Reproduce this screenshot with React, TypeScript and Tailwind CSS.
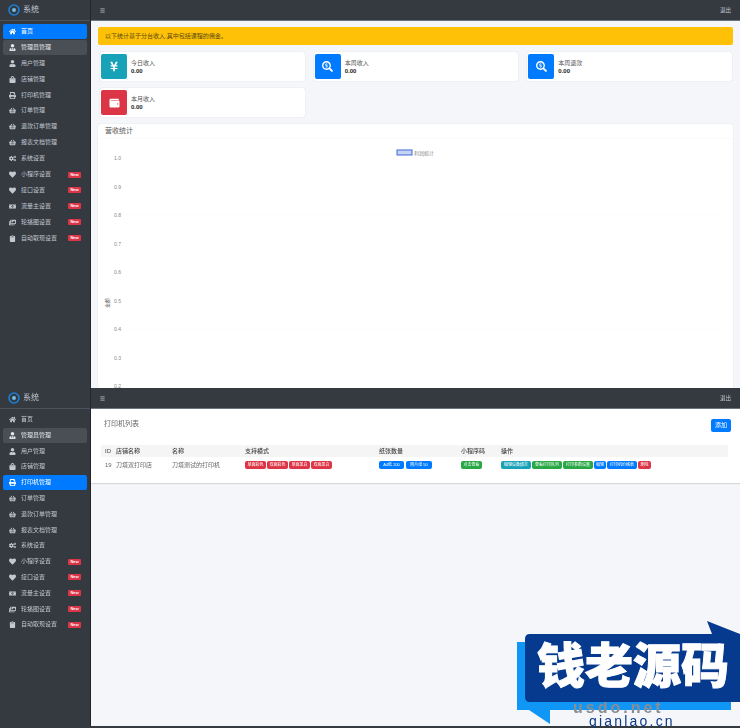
import type { ComponentType, ReactNode } from 'react';
import {
  FaHome, FaUserTie, FaUser, FaShoppingBag, FaPrint, FaShoppingBasket, FaCogs, FaHeart,
  FaMoneyBillAlt, FaImages, FaClipboard, FaYenSign, FaSearchDollar, FaWallet, FaBars,
} from 'react-icons/fa';

const font = { fontFamily: '"Liberation Sans", "Noto Sans CJK SC", sans-serif' };

type NavItem = { label: string; icon: ComponentType<{ className?: string }>; isNew?: boolean };

const navItems: NavItem[] = [
  { label: '首页', icon: FaHome },
  { label: '管理员管理', icon: FaUserTie },
  { label: '用户管理', icon: FaUser },
  { label: '店铺管理', icon: FaShoppingBag },
  { label: '打印机管理', icon: FaPrint },
  { label: '订单管理', icon: FaShoppingBasket },
  { label: '退款订单管理', icon: FaShoppingBasket },
  { label: '报表文档管理', icon: FaShoppingBasket },
  { label: '系统设置', icon: FaCogs },
  { label: '小程序设置', icon: FaHeart, isNew: true },
  { label: '接口设置', icon: FaHeart, isNew: true },
  { label: '流量主设置', icon: FaMoneyBillAlt, isNew: true },
  { label: '轮播图设置', icon: FaImages, isNew: true },
  { label: '自动取现设置', icon: FaClipboard, isNew: true },
];

function Sidebar({ active, gap }: { active: number; gap: string }) {
  return (
    <aside className="w-[91px] shrink-0 bg-[#343a40] border-r border-[#23272b]">
      <div className="h-[21px] flex items-center pl-[8px] gap-[3px] border-b border-[#4b545c]">
        <svg width="12" height="12" viewBox="0 0 12 12">
          <circle cx="6" cy="6" r="5" fill="none" stroke="#1c7ed6" strokeWidth="1.6" />
          <circle cx="6" cy="6" r="2" fill="#74b9e8" />
        </svg>
        <span className="text-[8px] text-[#c2c7d0]">系统</span>
      </div>
      <nav className={`pt-[3px] flex flex-col ${gap}`}>
        {navItems.map((item, i) => {
          const Icon = item.icon;
          return (
            <div
              key={item.label}
              className={`h-[15px] mx-[3px] rounded-[2px] flex items-center pl-[6px] pr-[6px] text-[6px] ${
                i === active
                  ? 'bg-[#007bff] text-white'
                  : i === 1
                    ? 'bg-[#4a4f55] text-[#e4e6e9]'
                    : 'text-[#c2c7d0]'
              }`}
            >
              <Icon className="w-[7px] h-[7px] mr-[5px] shrink-0" />
              <span className="flex-1 whitespace-nowrap">{item.label}</span>
              {item.isNew && (
                <span className="w-[13px] h-[6px] rounded-[1px] bg-[#dc3545] text-white text-[4px] font-bold leading-[6px] text-center">
                  New
                </span>
              )}
            </div>
          );
        })}
      </nav>
    </aside>
  );
}

function TopBar({ action }: { action: string }) {
  return (
    <header className="h-[21px] shrink-0 bg-[#343a40] border-b border-[#6c757d] flex items-center justify-between pl-[9px] pr-[9px] text-[#c2c7d0]">
      <FaBars className="w-[5px] h-[5px]" />
      <span className="text-[5.5px]">{action}</span>
    </header>
  );
}

function StatCard({ label, color, icon }: { label: string; color: string; icon: ReactNode }) {
  return (
    <div className="h-[29px] bg-white rounded-[2px] shadow-[0_0_1px_rgba(0,0,0,0.2)] flex items-center pl-[1px]">
      <div className={`w-[26px] h-[25px] rounded-[2px] flex items-center justify-center text-white ${color}`}>
        {icon}
      </div>
      <div className="ml-[4px] text-[6px] leading-[8px] text-[#555]">
        <div>{label}</div>
        <div className="font-bold text-[#222]">0.00</div>
      </div>
    </div>
  );
}

function Chart() {
  const ticks = ['1.0', '0.9', '0.8', '0.7', '0.6', '0.5', '0.4', '0.3', '0.2'];
  return (
    <svg className="w-full h-[250px] block" viewBox="0 0 635 250">
      {ticks.map((t, i) => (
        <g key={t}>
          <line x1="27" x2="625" y1={19 + i * 28.5} y2={19 + i * 28.5} stroke="#fbfbfb" strokeWidth="0.5" />
          <text x="16" y={21 + i * 28.5} fontSize="5" fill="#888">{t}</text>
        </g>
      ))}
      <text x="9" y="167" fontSize="5" fill="#666" transform="rotate(-90 11 167)">金额</text>
      <rect x="299" y="11" width="15" height="5" fill="#c6d4f4" stroke="#3f67d8" strokeWidth="1" />
      <text x="316" y="15.5" fontSize="5" fill="#888">利润统计</text>
    </svg>
  );
}

function Dashboard() {
  return (
    <section className="h-[388px] flex overflow-hidden">
      <Sidebar active={0} gap="gap-[0.9px]" />
      <div className="flex-1 min-w-0 flex flex-col bg-[#f4f6f9]">
        <TopBar action="退出" />
        <div className="pt-[6px] pl-[7px] pr-[7px]">
          <div className="h-[18px] rounded-[2px] bg-[#ffc107] flex items-center pl-[7px] text-[6px] text-[#5a4a10]">
            以下统计基于分台收入,其中包括课程的佣金。
          </div>
          <div className="mt-[7px] grid grid-cols-3 gap-x-[9px] gap-y-[7px] pl-[2px] pr-[1px]">
            <StatCard label="今日收入" color="bg-[#17a2b8]" icon={<FaYenSign className="w-[10px] h-[11px]" />} />
            <StatCard label="本周收入" color="bg-[#007bff]" icon={<FaSearchDollar className="w-[11px] h-[11px]" />} />
            <StatCard label="本周退款" color="bg-[#007bff]" icon={<FaSearchDollar className="w-[11px] h-[11px]" />} />
            <StatCard label="本月收入" color="bg-[#dc3545]" icon={<FaWallet className="w-[11px] h-[10px]" />} />
          </div>
          <div className="mt-[7px] bg-white rounded-t-[2px] shadow-[0_0_1px_rgba(0,0,0,0.2)]">
            <div className="h-[15px] flex items-center pl-[7px] text-[7px] text-[#555] border-b border-[#fbfbfb]">营收统计</div>
            <Chart />
          </div>
        </div>
      </div>
    </section>
  );
}

function Tag({ text, color, w }: { text: string; color: string; w: string }) {
  return (
    <span className={`h-[8px] rounded-[2px] text-white text-[4px] leading-[8px] text-center whitespace-nowrap overflow-hidden shrink-0 ${color} ${w}`}>
      {text}
    </span>
  );
}

function PrinterList() {
  return (
    <section className="flex-1 min-h-0 flex overflow-hidden">
      <Sidebar active={4} gap="gap-[0.8px]" />
      <div className="flex-1 min-w-0 flex flex-col bg-[#f4f6f9]">
        <TopBar action="退出" />
        <div className="h-[74px] bg-white shadow-[0_1px_1px_rgba(0,0,0,0.12)]">
          <div className="flex items-start justify-between pt-[10px] pl-[13px] pr-[9px]">
            <span className="text-[7px] leading-[10px] text-[#666]">打印机列表</span>
            <span className="w-[20px] h-[13px] rounded-[2px] bg-[#007bff] text-white text-[6px] leading-[13px] text-center">添加</span>
          </div>
          <div className="mt-[13px] ml-[10px] mr-[12px]">
            <div className="h-[12px] bg-[#f5f5f5] flex items-center text-[6px] font-medium text-[#444] pl-[4px]">
              <span className="w-[11px]">ID</span>
              <span className="w-[56px]">店铺名称</span>
              <span className="w-[73px]">名称</span>
              <span className="w-[134px]">支持模式</span>
              <span className="w-[82px]">纸张数量</span>
              <span className="w-[40px]">小程序码</span>
              <span>操作</span>
            </div>
            <div className="h-[16px] flex items-center text-[6px] text-[#666] pl-[4px]">
              <span className="w-[11px]">19</span>
              <span className="w-[56px] whitespace-nowrap">刀塔双打印店</span>
              <span className="w-[73px] whitespace-nowrap">刀塔测试的打印机</span>
              <div className="w-[134px] flex gap-[1px]">
                <Tag text="单面彩色" color="bg-[#dc3545]" w="w-[21px]" />
                <Tag text="双面彩色" color="bg-[#dc3545]" w="w-[21px]" />
                <Tag text="单面黑白" color="bg-[#dc3545]" w="w-[21px]" />
                <Tag text="双面黑白" color="bg-[#dc3545]" w="w-[21px]" />
              </div>
              <div className="w-[82px] flex gap-[2px]">
                <Tag text="A4纸 200" color="bg-[#007bff]" w="w-[25px]" />
                <Tag text="照片纸 50" color="bg-[#007bff]" w="w-[26px]" />
              </div>
              <div className="w-[40px]">
                <Tag text="点击查看" color="bg-[#28a745]" w="block w-[21px]" />
              </div>
              <div className="flex gap-[1px]">
                <Tag text="编辑设备绑定" color="bg-[#17a2b8]" w="w-[30px]" />
                <Tag text="查看打印队列" color="bg-[#28a745]" w="w-[30px]" />
                <Tag text="打印参数设置" color="bg-[#28a745]" w="w-[30px]" />
                <Tag text="编辑" color="bg-[#007bff]" w="w-[12px]" />
                <Tag text="打印机价格表" color="bg-[#007bff]" w="w-[30px]" />
                <Tag text="删除" color="bg-[#dc3545]" w="w-[13px]" />
              </div>
            </div>
          </div>
        </div>
      </div>
    </section>
  );
}

function Watermark() {
  return (
    <div className="absolute left-[517px] top-[621px] w-[223px] h-[107px] overflow-hidden" style={font}>
      <svg className="absolute inset-0" width="223" height="107" viewBox="0 0 223 107">
        <path d="M0 21 H214 V89 H33 V103 L12 89 H0 Z" fill="#1097f5" />
      </svg>
      {/* grey text sits under the dark banner, only its lower part shows */}
      <div className="absolute left-[56px] top-[81px] text-[16px] leading-[12px] font-bold text-[#8a8d92] tracking-[3px] whitespace-nowrap">
        usdo.net
      </div>
      <svg className="absolute inset-0" width="223" height="107" viewBox="0 0 223 107">
        <path d="M13 13 H195 L190 0 L223 13 V81 H13 Q8 81 8 76 V18 Q8 13 13 13 Z" fill="#053a8e" />
      </svg>
      <div className="absolute left-[14px] top-[16px] w-[204px] text-center text-white text-[48px] leading-[60px] font-black whitespace-nowrap [-webkit-text-stroke:1px_white]">
        钱老源码
      </div>
      <div className="absolute left-[72px] top-[93px] text-[14px] leading-[14px] font-medium text-[#0d3a8c] tracking-[2.2px] whitespace-nowrap">
        qianlao.cn
      </div>
    </div>
  );
}

export default function App() {
  return (
    <div className="relative w-[740px] h-[728px] flex flex-col overflow-hidden bg-[#343a40]" style={font}>
      <div className="h-[726px] flex flex-col blur-[0.6px]">
        <Dashboard />
        <PrinterList />
      </div>
      <Watermark />
    </div>
  );
}
